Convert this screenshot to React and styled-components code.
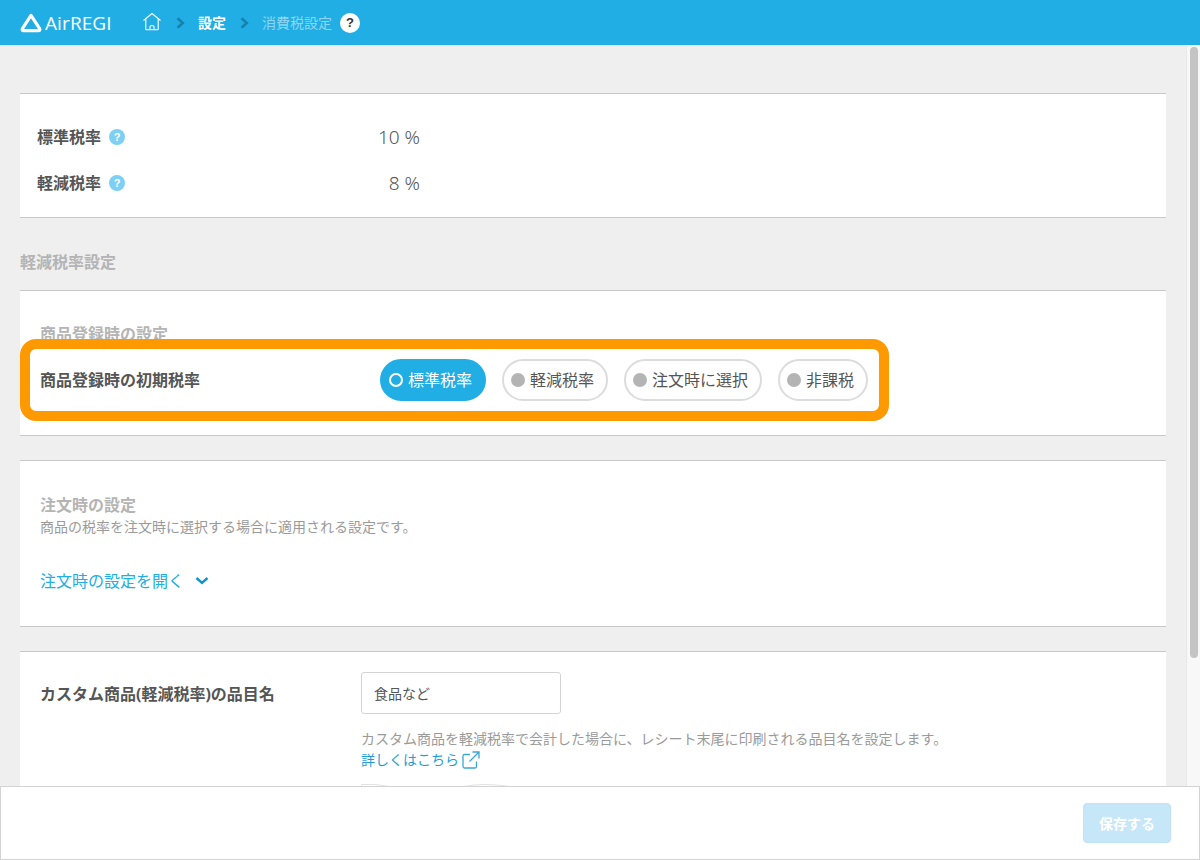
import React from 'react';
import styled, { createGlobalStyle } from 'styled-components';

const FONT = `"Noto Sans", "Noto Sans CJK JP", sans-serif`;
const BLUE = '#20aee5';

const GlobalStyle = createGlobalStyle`
  html, body {
    margin: 0;
    height: 100%;
    overflow: hidden;
    background: #efefef;
    font-family: ${FONT};
    color: #555;
  }
  * { box-sizing: border-box; }
`;

const Page = styled.div`
  position: relative;
  display: flex;
  flex-direction: column;
  width: 1200px;
  height: 860px;
  overflow: hidden;
`;

const Header = styled.header`
  display: flex;
  align-items: center;
  flex: 0 0 45px;
  padding-left: 20px;
  background: ${BLUE};
`;

const Logo = styled.div`
  display: flex;
  align-items: center;
  gap: 3px;
  width: 122px;
  color: #fff;
`;

const LogoText = styled.span`
  font-family: "Open Sans", sans-serif;
  font-size: 19px;
  line-height: 20px;
  letter-spacing: 0.1px;
`;

const Crumb = styled.span`
  font-size: 14px;
  line-height: 20px;
  font-weight: ${({ $current }) => ($current ? 400 : 700)};
  color: ${({ $current }) => ($current ? '#8fd6f2' : '#fff')};
`;

const Chevron = styled.svg`
  display: block;
  margin: ${({ $m }) => $m};
`;

const HelpDot = styled.span`
  display: flex;
  align-items: center;
  justify-content: center;
  width: ${({ $size }) => $size}px;
  height: ${({ $size }) => $size}px;
  margin-left: ${({ $gap }) => $gap}px;
  border-radius: 50%;
  background: ${({ $light }) => ($light ? '#7dd0f4' : '#fff')};
  color: ${({ $light }) => ($light ? '#fff' : '#333')};
  font-family: "Liberation Sans", sans-serif;
  font-size: ${({ $size }) => Math.round($size * 0.66)}px;
  font-weight: 700;
  line-height: 1;
`;

const Body = styled.div`
  display: flex;
  flex: 1;
  min-height: 0;
`;

const Content = styled.main`
  flex: 1;
  min-width: 0;
  padding: 48px 20px 0;
  overflow: hidden;
`;

const ScrollTrack = styled.div`
  flex: 0 0 14px;
  padding: 2px 2px 0 3px;
  background: #f8f8f8;
  border-left: 1px solid #e8e8e8;
`;

const ScrollThumb = styled.div`
  height: 611px;
  border-radius: 5px;
  background: #c4c4c4;
`;

const Card = styled.section`
  background: #fff;
  border-top: 1px solid #c8c8c8;
  border-bottom: ${({ $open }) => ($open ? 'none' : '1px solid #c8c8c8')};
  margin-bottom: 24px;
`;

const RatesCard = styled(Card)`
  height: 125px;
  padding: 20px 17px 0;
`;

const RateRow = styled.div`
  display: flex;
  align-items: center;
  height: 46px;
`;

const RateLabel = styled.span`
  font-size: 16px;
  font-weight: 700;
  line-height: 24px;
`;

const RateValue = styled.span`
  width: 295px;
  margin-left: auto;
  margin-right: 729px;
  text-align: right;
  font-size: 19px;
  font-weight: 300;
  line-height: 24px;
  color: #555;
`;

const SectionTitle = styled.h2`
  margin: 32px 0 16px;
  font-size: 16px;
  font-weight: 700;
  line-height: 24px;
  color: #b4b4b4;
`;

const DefaultsCard = styled(Card)`
  height: 146px;
  padding: 31px 20px 0;
`;

const CardTitle = styled.h3`
  margin: 0;
  font-size: 16px;
  font-weight: 700;
  line-height: 24px;
  color: #b4b4b4;
`;

const Highlight = styled.div`
  position: relative;
  display: flex;
  align-items: center;
  width: 869px;
  height: 82px;
  margin: -7px 0 0 -20px;
  padding-left: 10px;
  border: 10px solid #ff9900;
  border-radius: 16px;
  background: #fff;
`;

const FieldLabel = styled.span`
  flex: 0 0 340px;
  font-size: 16px;
  font-weight: 700;
  line-height: 24px;
  color: #555;
`;

const Pills = styled.div`
  display: flex;
  gap: 16px;
`;

const Pill = styled.div`
  display: flex;
  align-items: center;
  height: 42px;
  padding: 0 12px 0 7px;
  border-radius: 21px;
  border: 2px solid ${({ $active }) => ($active ? BLUE : '#dcdcdc')};
  background: ${({ $active }) => ($active ? BLUE : '#fff')};
  color: ${({ $active }) => ($active ? '#fff' : '#555')};
  font-size: 16px;
  line-height: 20px;
  white-space: nowrap;
`;

const Radio = styled.span`
  width: 14px;
  height: 14px;
  margin-right: 5px;
  border-radius: 50%;
  background: ${({ $active }) => ($active ? 'transparent' : '#b4b4b4')};
  border: ${({ $active }) => ($active ? '2.5px solid #fff' : 'none')};
`;

const OrderCard = styled(Card)`
  height: 167px;
  padding: 32px 20px 0;
`;

const Caption = styled.p`
  margin: 0;
  font-size: 14px;
  line-height: 20px;
  color: #9a9a9a;
`;

const OpenLink = styled.a`
  display: flex;
  align-items: center;
  gap: 11px;
  margin-top: 34px;
  font-size: 16px;
  line-height: 20px;
  color: ${BLUE};
`;

const CustomCard = styled(Card)`
  display: flex;
  height: 200px;
  padding: 20px 20px 0;
  margin-bottom: 0;
`;

const CustomLabel = styled(FieldLabel)`
  flex: 0 0 321px;
  height: 44px;
  display: flex;
  align-items: center;
`;

const CustomField = styled.div`
  display: flex;
  flex-direction: column;
`;

const NameInput = styled.div`
  display: flex;
  align-items: center;
  width: 200px;
  height: 42px;
  padding-left: 12px;
  border: 1px solid #d4d4d4;
  border-radius: 3px;
  font-size: 14px;
  color: #555;
`;

const HelpText = styled(Caption)`
  margin-top: 15px;
`;

const DetailLink = styled.a`
  display: flex;
  align-items: center;
  gap: 3px;
  margin-top: 1px;
  font-size: 14px;
  line-height: 20px;
  color: #1d9fd6;
`;

const ReceiptPeek = styled.svg`
  display: block;
  margin-top: 13px;
`;

const Footer = styled.footer`
  position: absolute;
  left: 0;
  right: 0;
  bottom: 0;
  display: flex;
  align-items: center;
  justify-content: flex-end;
  height: 74px;
  padding-right: 28px;
  background: #fff;
  border: 1px solid #d4d4d4;
`;

const SaveButton = styled.button`
  width: 88px;
  height: 40px;
  padding: 0;
  border: 1px solid #bfe3f5;
  border-radius: 4px;
  background: #c6e7f8;
  color: #fff;
  font-family: ${FONT};
  font-size: 14px;
  font-weight: 700;
`;

const AirLogo = () => (
  <svg width="22" height="20" viewBox="0 0 22 20" fill="none">
    <path d="M11 2.4 L19.6 15.6 Q20.4 17.6 18.4 17.6 H3.6 Q1.6 17.6 2.4 15.6 Z" stroke="#fff" strokeWidth="3.2" strokeLinejoin="round" />
  </svg>
);

const HomeIcon = () => (
  <svg width="20" height="20" viewBox="0 2 20 20" fill="none" stroke="#fff" strokeWidth="1.1" strokeLinejoin="round">
    <path d="M1.5 9.5 L10 2.5 L18.5 9.5" />
    <path d="M3.8 8 V18 Q3.8 18.7 4.5 18.7 H15.5 Q16.2 18.7 16.2 18 V8" />
    <path d="M8 18.7 V15.5 Q8 14.5 10 14.5 Q12 14.5 12 15.5 V18.7" />
  </svg>
);

const CrumbArrow = ({ m }) => (
  <Chevron $m={m} width="9" height="12" viewBox="0 0 9 12" fill="none">
    <path d="M1.5 1.2 L6.8 6 L1.5 10.8" stroke="#1a80ae" strokeWidth="2.6" />
  </Chevron>
);

const ExternalIcon = () => (
  <svg width="18" height="18" viewBox="0 0 18 18" fill="none" stroke="#38a6d8" strokeWidth="1.3">
    <path d="M8 3.5 H2.5 Q1 3.5 1 5 V15.5 Q1 17 2.5 17 H13 Q14.5 17 14.5 15.5 V10.5" />
    <path d="M7.5 10.5 L16.5 1.5 M10.5 1 H17 V7.5" />
  </svg>
);

export default function App() {
  return (
    <Page>
      <GlobalStyle />
      <Header>
        <Logo>
          <AirLogo />
          <LogoText>AirREGI</LogoText>
        </Logo>
        <HomeIcon />
        <CrumbArrow m="0 13px 0 14px" />
        <Crumb>設定</Crumb>
        <CrumbArrow m="0 13px 0 14px" />
        <Crumb $current>消費税設定</Crumb>
        <HelpDot $size={20} $gap={8}>?</HelpDot>
      </Header>
      <Body>
        <Content>
          <RatesCard>
            <RateRow>
              <RateLabel>標準税率</RateLabel>
              <HelpDot $light $size={16} $gap={8}>?</HelpDot>
              <RateValue>10 %</RateValue>
            </RateRow>
            <RateRow>
              <RateLabel>軽減税率</RateLabel>
              <HelpDot $light $size={16} $gap={8}>?</HelpDot>
              <RateValue>8 %</RateValue>
            </RateRow>
          </RatesCard>
          <SectionTitle>軽減税率設定</SectionTitle>
          <DefaultsCard>
            <CardTitle>商品登録時の設定</CardTitle>
            <Highlight>
              <FieldLabel>商品登録時の初期税率</FieldLabel>
              <Pills>
                <Pill $active><Radio $active />標準税率</Pill>
                <Pill><Radio />軽減税率</Pill>
                <Pill><Radio />注文時に選択</Pill>
                <Pill><Radio />非課税</Pill>
              </Pills>
            </Highlight>
          </DefaultsCard>
          <OrderCard>
            <CardTitle>注文時の設定</CardTitle>
            <Caption>商品の税率を注文時に選択する場合に適用される設定です。</Caption>
            <OpenLink>
              注文時の設定を開く
              <svg width="14" height="10" viewBox="0 0 14 10" fill="none">
                <path d="M1.5 2 L7 7 L12.5 2" stroke="#1592c8" strokeWidth="2.4" />
              </svg>
            </OpenLink>
          </OrderCard>
          <CustomCard $open>
            <CustomLabel>カスタム商品(軽減税率)の品目名</CustomLabel>
            <CustomField>
              <NameInput>食品など</NameInput>
              <HelpText>カスタム商品を軽減税率で会計した場合に、レシート末尾に印刷される品目名を設定します。</HelpText>
              <DetailLink>詳しくはこちら<ExternalIcon /></DetailLink>
              <ReceiptPeek width="150" height="8" viewBox="0 0 150 8" fill="none" stroke="#e2e2e2">
                <path d="M0.5 4 V1.5 Q14 0.5 28 3.5 M103 3.5 Q122 -0.5 149 3.5" />
              </ReceiptPeek>
            </CustomField>
          </CustomCard>
        </Content>
        <ScrollTrack>
          <ScrollThumb />
        </ScrollTrack>
      </Body>
      <Footer>
        <SaveButton>保存する</SaveButton>
      </Footer>
    </Page>
  );
}
